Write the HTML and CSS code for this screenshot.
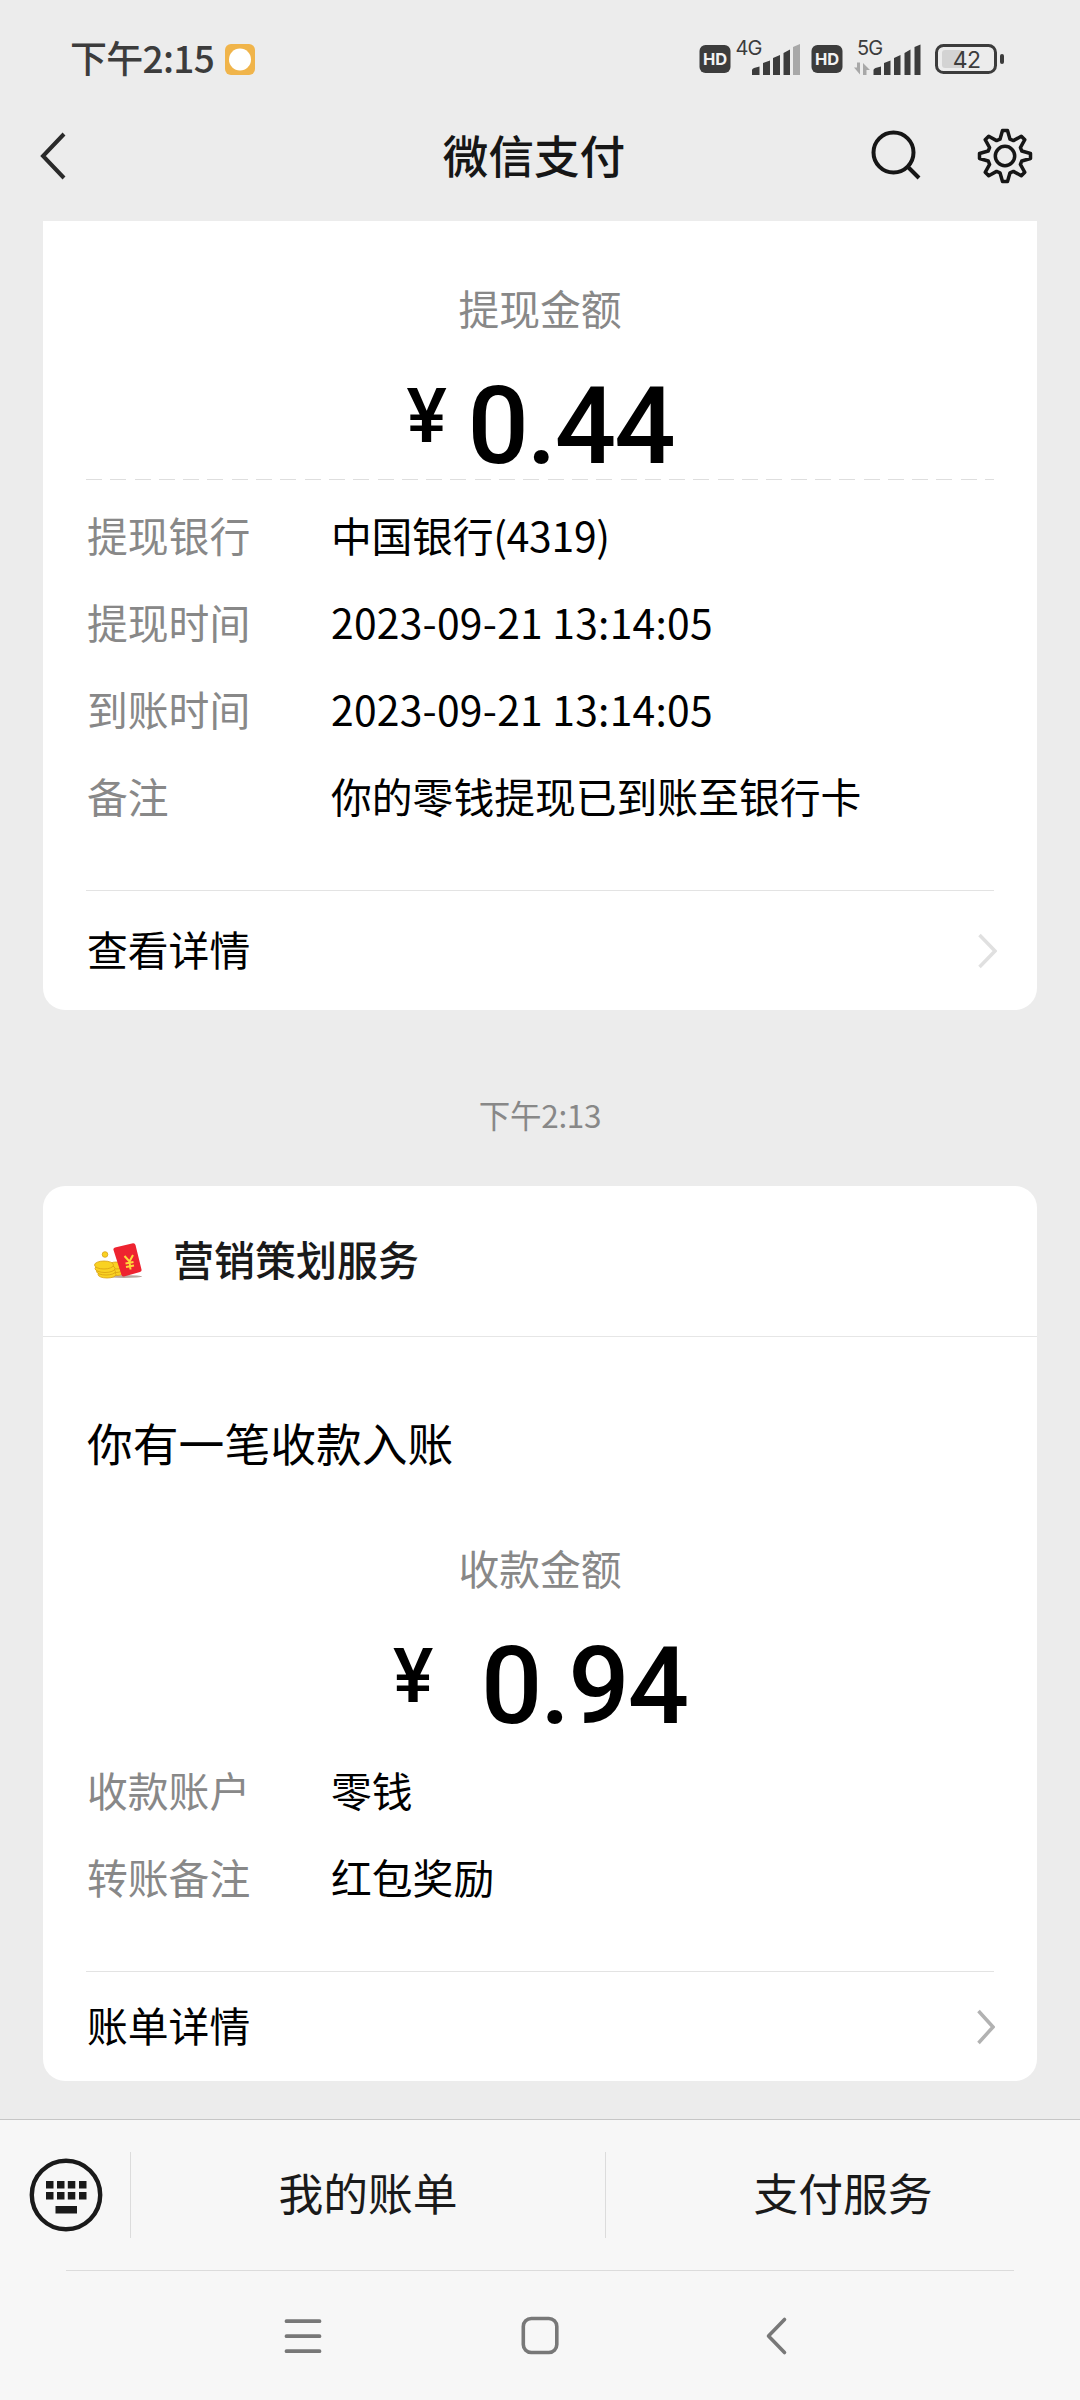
FILE: index.html
```html
<!DOCTYPE html>
<html lang="zh-CN">
<head>
<meta charset="utf-8">
<title>微信支付</title>
<link rel="stylesheet" href="styles.css">
</head>
<body>
<div class="screen">
  <div class="status">
    <span class="clock">下午2:15</span>
    <svg class="app-dot" width="30" height="31" viewBox="0 0 30 31"><rect width="30" height="31" rx="6" fill="#f0b44a"/><circle cx="15" cy="15.5" r="11" fill="#fff"/></svg>
    <svg class="indicators" width="306" height="60" viewBox="699 29 306 60">
      <g fill="#3c3c3c">
        <rect x="699.5" y="45" width="31" height="28" rx="6"/>
        <rect x="811.5" y="45" width="31" height="28" rx="6"/>
        <path d="M752 75v-5q0-1 2-2l5.500-1.500V75zM763 75V63l7-2.500V75zM773 75V58l7-3V75zM783.500 75V53l6.500-3.500V75z"/>
        <path d="M873.500 75v-5q0-1 2-2l5.500-1.500V75zM884 75V63l6.500-2.500V75zM894 75V58l6.500-3V75zM904.500 75V53l6-3.500V75zM914.500 75V47l6-2.500V75z"/>
      </g>
      <path d="M793 75V47l7-3V75z" fill="#a8a8a8"/>
      <path d="M860 62.500v12l-6-7h3v-5zM863 75v-12l7 7h-3.500v5z" fill="#a8a8a8"/>
      <g class="hd"><text x="715" y="65">HD</text><text x="827" y="65">HD</text></g>
      <g class="net"><text x="735.500" y="55">4G</text><text x="857" y="55">5G</text></g>
      <rect x="942" y="50" width="21" height="18" rx="3" fill="#d3d3d3"/>
      <rect x="936.500" y="45.500" width="59" height="27" rx="7" fill="none" stroke="#3c3c3c" stroke-width="3"/>
      <rect x="1000" y="54" width="4" height="10" rx="2" fill="#3c3c3c"/>
      <text class="level" x="966.500" y="68">42</text>
    </svg>
  </div>
  <div class="navbar">
    <svg class="back" width="30" height="50" viewBox="0 0 30 50"><path d="M25 3 4 25l21 22" fill="none" stroke="#2a2a2a" stroke-width="4"/></svg>
    <h1 class="nav-title">微信支付</h1>
    <div class="nav-actions">
      <svg width="54" height="54" viewBox="0 0 54 54" fill="none" stroke="#161616" stroke-width="4"><circle cx="23.500" cy="25.500" r="20"/><path d="M37.500 39.500 49 51"/></svg>
      <svg class="gear" width="58" height="58" viewBox="-29 -29 58 58" fill="none" stroke="#161616" stroke-width="3.500" stroke-linejoin="round">
        <circle r="9.700"/>
        <path d="M-2.500 -25.500H2.500L5 -16.800L8.400 -15.400L16.300 -19.800L19.800 -16.300L15.400 -8.400L16.800 -5L25.500 -2.500V2.500L16.800 5L15.400 8.400L19.800 16.300L16.300 19.800L8.400 15.400L5 16.800L2.500 25.500H-2.500L-5 16.800L-8.400 15.400L-16.300 19.800L-19.800 16.300L-15.400 8.400L-16.800 5L-25.500 2.500V-2.500L-16.800 -5L-15.400 -8.400L-19.800 -16.300L-16.300 -19.800L-8.400 -15.400L-5 -16.800Z"/>
      </svg>
    </div>
  </div>

  <main class="feed">
    <section class="card card-clipped">
      <div class="caption">提现金额</div>
      <div class="amount"><span class="yen">¥</span><span>0.44</span></div>
      <div class="dashes"></div>
      <dl class="rows rows-first">
        <dt>提现银行</dt><dd class="bank">中国银行(4319)</dd>
        <dt>提现时间</dt><dd class="date">2023-09-21 13:14:05</dd>
        <dt>到账时间</dt><dd class="date">2023-09-21 13:14:05</dd>
        <dt>备注</dt><dd>你的零钱提现已到账至银行卡</dd>
      </dl>
      <div class="link link-tall"><span>查看详情</span>
        <svg class="chevron-faint" width="20" height="36" viewBox="0 0 20 36"><path d="M2.500 2 18 18 2.500 34" fill="none" stroke="#e0e0e0" stroke-width="3.500"/></svg>
      </div>
    </section>

    <div class="timestamp">下午2:13</div>

    <section class="card">
      <div class="card-head">
        <svg width="50" height="38" viewBox="94 1243 50 38">
          <ellipse cx="124" cy="1277.500" rx="18" ry="1.500" fill="#b9a8a0"/>
          <g fill="#f9d222" stroke="#d9a012" stroke-width=".8">
            <ellipse cx="117" cy="1273" rx="7" ry="3.500"/><ellipse cx="116" cy="1270" rx="7" ry="3.500"/><ellipse cx="116" cy="1266.500" rx="7" ry="3.500"/>
            <ellipse cx="107" cy="1275.500" rx="9" ry="3.500"/><ellipse cx="106" cy="1272.500" rx="9.500" ry="3.500"/><ellipse cx="105" cy="1269.500" rx="10" ry="4"/><ellipse cx="104" cy="1266" rx="9.500" ry="4"/>
            <circle cx="105" cy="1255.500" r="2.800"/>
          </g>
          <path d="M115 1248.500q-2 .5-1.500 2.500l8 25q.7 2 2.500 1.500l16-4.500q2-.5 1.500-2.500l-6-24.500q-.5-2-2.500-1.800z" fill="#ee2330"/>
          <path d="M124.500 1257l5 5.500 3.500-6.500M129.500 1262.500l1 8M125.500 1264.500l8-1.500M126 1268l8-1.500" fill="none" stroke="#ffd93a" stroke-width="2"/>
        </svg>
        <h2>营销策划服务</h2>
      </div>
      <p class="headline">你有一笔收款入账</p>
      <div class="caption">收款金额</div>
      <div class="amount amount-wide"><span class="yen">¥</span><span>0.94</span></div>
      <dl class="rows">
        <dt>收款账户</dt><dd>零钱</dd>
        <dt>转账备注</dt><dd>红包奖励</dd>
      </dl>
      <div class="link"><span>账单详情</span>
        <svg width="20" height="36" viewBox="0 0 20 36"><path d="M3.500 2 18 18 3.500 34" fill="none" stroke="#b2b2b2" stroke-width="3.500"/></svg>
      </div>
    </section>
  </main>

  <footer class="menu">
    <div class="keyboard">
      <svg width="74" height="74" viewBox="-37 -37 74 74"><circle r="34.200" fill="none" stroke="#1a1a1a" stroke-width="4.400"/><path fill="#1a1a1a" d="M-20-14h7.500v7.500h-7.500zM-9-14h7.500v7.500h-7.500zM1.800-14h7.500v7.500h-7.500zM13-14h7.500v7.500h-7.500zM-20-3h7.500v7.500h-7.500zM-9-3h7.500v7.500h-7.500zM1.800-3h7.500v7.500h-7.500zM13-3h7.500v7.500h-7.500zM-10.500 11h21.500v7.500h-21.500z"/></svg>
    </div>
    <div class="menu-item">我的账单</div>
    <div class="menu-item">支付服务</div>
  </footer>
  <div class="rule"></div>
  <div class="sysnav">
    <svg width="40" height="40" viewBox="0 0 40 40" stroke="#787878" stroke-width="3.800" stroke-linecap="round"><path d="M3.500 5.200h33M3.500 20.200h33M3.500 35.200h33"/></svg>
    <svg width="40" height="40" viewBox="0 0 40 40" fill="none" stroke="#787878" stroke-width="3.600"><rect x="3.300" y="2.500" width="33.500" height="34" rx="8"/></svg>
    <svg width="40" height="40" viewBox="0 0 40 40" fill="none" stroke="#787878" stroke-width="3.600" stroke-linecap="round" stroke-linejoin="round"><path d="M27.500 3.500 11.500 20l16 16.500"/></svg>
  </div>
</div>
</body>
</html>
```
FILE: styles.css
```css
* { box-sizing: border-box; margin: 0; padding: 0; }

body {
  background: #ececec;
  color: #000;
  font-family: "Noto Sans CJK SC", sans-serif;
  font-size: 40.8px;
}

svg { display: block; flex: none; }

.screen {
  display: flex;
  flex-direction: column;
  width: 1080px;
  height: 2400px;
  overflow: hidden;
}

/* Status bar */
.status {
  display: flex;
  align-items: center;
  height: 118px;
  padding: 0 75px 0 70px;
}
.clock {
  width: 155px;
  padding-bottom: 4px;
  color: #3c3c3c;
  font-size: 37px;
  font-weight: 500;
  letter-spacing: -0.7px;
  white-space: nowrap;
}
.indicators { margin-left: auto; }
.hd text {
  fill: #f2f2f2;
  font: 700 16.5px "Inter", sans-serif;
  text-anchor: middle;
}
.net text {
  fill: #3c3c3c;
  font: 400 20px "Inter", sans-serif;
  letter-spacing: -0.8px;
}
.level {
  fill: #3c3c3c;
  font: 400 23px "Inter", sans-serif;
  text-anchor: middle;
  letter-spacing: -0.8px;
}

/* Title bar */
.navbar {
  display: grid;
  grid-template-columns: 1fr auto 1fr;
  align-items: center;
  height: 103px;
  padding: 0 46px 27px 39px;
}
.nav-title {
  padding: 0 0 5px 0;
  margin-left: -5px;
  color: #161616;
  font-size: 45.6px;
  font-weight: 500;
  line-height: 60px;
}
.nav-actions {
  display: flex;
  justify-content: flex-end;
  gap: 52px;
}

/* Message feed */
.feed {
  height: 1898px;
  padding: 0 43px;
}
.card {
  background: #fff;
  border-radius: 22px;
}
.card-clipped { border-radius: 0 0 22px 22px; padding-top: 56px; }

.caption {
  color: #888;
  line-height: 61px;
  height: 60px;
  text-align: center;
}
.amount {
  display: flex;
  justify-content: center;
  gap: 20px;
  height: 142px;
  padding-top: 39px;
  font-family: Roboto, sans-serif;
  font-size: 108px;
  font-weight: 500;
  line-height: 100px;
  letter-spacing: -2px;
}
.amount-wide { gap: 47px; }
.yen {
  width: 41px;
  font-size: 76px;
  line-height: 80px;
  letter-spacing: 0;
}
.dashes {
  height: 1px;
  margin: 0 43px;
  background: repeating-linear-gradient(90deg, #dedede 0 16px, transparent 16px 24.3px);
}
.rows {
  display: grid;
  grid-template-columns: 244px 1fr;
  grid-auto-rows: 87px;
  margin: 7px 43px 0;
  padding-bottom: 51px;
  border-bottom: 1px solid #e3e3e3;
  line-height: 87px;
}
.rows-first { margin-top: 11px; }
.rows dt { padding-left: 1px; color: #888; }
.rows dd { padding-left: 1px; white-space: nowrap; }
.rows .date { letter-spacing: 0.25px; }
.rows .bank { letter-spacing: -0.25px; }
.link {
  display: flex;
  align-items: center;
  justify-content: space-between;
  height: 109px;
  padding: 0 42px 0 44px;
}
.link-tall { height: 119px; }
.link span { padding-bottom: 4px; }
.chevron-faint { margin-right: -2px; }

.timestamp {
  height: 176px;
  padding-top: 84px;
  color: #888;
  font-size: 31.5px;
  line-height: 40px;
  text-align: center;
  letter-spacing: -0.3px;
}

.card-head {
  display: flex;
  align-items: center;
  gap: 29px;
  height: 151px;
  padding-left: 51px;
  border-bottom: 1px solid #e6e6e6;
}
.card-head h2 {
  padding-bottom: 6px;
  color: #1a1a1a;
  font-size: 41px;
  font-weight: 500;
}
.headline {
  margin: 75px 44px 65px;
  font-size: 45.8px;
  line-height: 60px;
}

/* Bottom menu */
.menu {
  display: flex;
  align-items: center;
  height: 151px;
  border-top: 1px solid #c6c6c6;
  background: #f7f7f7;
}
.keyboard {
  width: 130px;
  padding-left: 29px;
}
.menu-item {
  flex: 1;
  height: 86px;
  border-left: 1px solid #dcdcdc;
  color: #1a1a1a;
  font-size: 44.8px;
  line-height: 80px;
  text-align: center;
}
.rule {
  height: 1px;
  background: linear-gradient(#dcdcdc, #dcdcdc) center / 948px 1px no-repeat #f7f7f7;
}
.sysnav {
  display: grid;
  grid-template-columns: repeat(3, 237px);
  justify-content: center;
  place-items: center;
  height: 129px;
  background: #f7f7f7;
}
```
